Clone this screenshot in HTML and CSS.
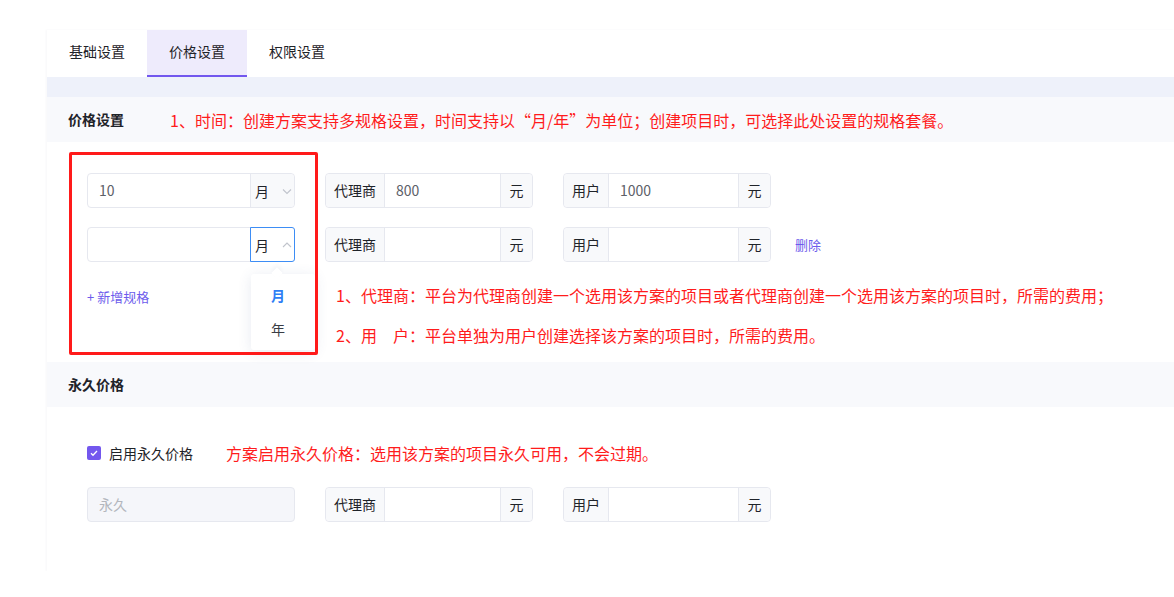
FILE: index.html
```html
<!DOCTYPE html>
<html lang="zh-CN">
<head>
    <meta charset="UTF-8">
    <meta name="viewport" content="width=device-width, initial-scale=1.0">
    <title>价格设置</title>
    <link rel="stylesheet" href="styles.css">
</head>
<body>
    <div class="page">
        <!-- Tabs -->
        <div class="tabs">
            <div class="tab">基础设置</div>
            <div class="tab active">价格设置</div>
            <div class="tab">权限设置</div>
        </div>
        <div class="band"></div>

        <!-- 价格设置 -->
        <div class="section-head">
            <span class="head-title">价格设置</span>
            <span class="note head-note">1、时间：创建方案支持多规格设置，时间支持以“月/年”为单位；创建项目时，可选择此处设置的规格套餐。</span>
        </div>
        <div class="section-body price-body">
            <div class="mark-box"></div>

            <div class="row">
                <div class="group spec">
                    <div class="field value">10</div>
                    <div class="unit-select">
                        <span>月</span>
                        <svg class="chev" viewBox="0 0 12 12"><path d="M2 4.5l4 4 4-4" fill="none" stroke="#c0c4cc" stroke-width="1.1"/></svg>
                    </div>
                </div>
                <div class="group agent">
                    <div class="addon pre">代理商</div>
                    <div class="field value">800</div>
                    <div class="addon suf">元</div>
                </div>
                <div class="group user">
                    <div class="addon pre">用户</div>
                    <div class="field value">1000</div>
                    <div class="addon suf">元</div>
                </div>
            </div>

            <div class="row">
                <div class="group spec">
                    <div class="field"></div>
                    <div class="unit-select focus">
                        <span>月</span>
                        <svg class="chev" viewBox="0 0 12 12"><path d="M2 8l4-4 4 4" fill="none" stroke="#c0c4cc" stroke-width="1.1"/></svg>
                    </div>
                    <div class="dropdown">
                        <div class="option current">月</div>
                        <div class="option">年</div>
                    </div>
                </div>
                <div class="group agent">
                    <div class="addon pre">代理商</div>
                    <div class="field"></div>
                    <div class="addon suf">元</div>
                </div>
                <div class="group user">
                    <div class="addon pre">用户</div>
                    <div class="field"></div>
                    <div class="addon suf">元</div>
                </div>
                <a class="link delete" href="#">删除</a>
            </div>

            <div class="add-row">
                <a class="link add" href="#">+ 新增规格</a>
                <div class="notes">
                    <div class="note">1、代理商：平台为代理商创建一个选用该方案的项目或者代理商创建一个选用该方案的项目时，所需的费用；</div>
                    <div class="note">2、用　户：平台单独为用户创建选择该方案的项目时，所需的费用。</div>
                </div>
            </div>
        </div>

        <!-- 永久价格 -->
        <div class="section-head">
            <span class="head-title">永久价格</span>
        </div>
        <div class="section-body forever-body">
            <div class="check-row">
                <span class="checkbox">
                    <svg viewBox="0 0 14 14"><path d="M4 7.2l2 2 4-4.2" fill="none" stroke="#fff" stroke-width="1.3"/></svg>
                </span>
                <span class="check-label">启用永久价格</span>
                <span class="note check-note">方案启用永久价格：选用该方案的项目永久可用，不会过期。</span>
            </div>
            <div class="row">
                <div class="group spec disabled">
                    <div class="field placeholder">永久</div>
                </div>
                <div class="group agent">
                    <div class="addon pre">代理商</div>
                    <div class="field"></div>
                    <div class="addon suf">元</div>
                </div>
                <div class="group user">
                    <div class="addon pre">用户</div>
                    <div class="field"></div>
                    <div class="addon suf">元</div>
                </div>
            </div>
        </div>
    </div>
</body>
</html>
```

FILE: styles.css
```css
body {
    margin: 0;
    background: #fff;
    font-family: "Noto Sans CJK SC", "Noto Sans", sans-serif;
    color: #1f2329;
    font-size: 14px;
    overflow: hidden;
}

.page {
    margin: 30px 0 0 47px;
    box-shadow: -1px 0 2px rgba(40, 50, 90, 0.04);
}

/* tabs */
.tabs {
    display: flex;
    background: #fff;
    height: 47px;
    border-radius: 4px 0 0 0;
}
.tab {
    width: 100px;
    height: 45px;
    line-height: 43px;
    text-align: center;
    border-bottom: 2px solid transparent;
    color: #1f2329;
}
.tab.active {
    background: #eeebfc;
    border-bottom-color: #7257ee;
}
.band {
    height: 20px;
    background: #eef1fa;
}

/* section header */
.section-head {
    height: 43px;
    padding-bottom: 2px;
    display: flex;
    align-items: center;
    padding-left: 21px;
    background: #f8f9fc;
}
.head-title {
    font-weight: bold;
    font-size: 14px;
}
.note {
    color: #ff1c1c;
    font-size: 16px;
    white-space: nowrap;
}
.head-note {
    margin-left: 46px;
    margin-top: 3px;
}

.section-body {
    background: #fff;
    padding-left: 40px;
    position: relative;
}
.price-body {
    padding-top: 31px;
    padding-bottom: 7px;
}
.forever-body {
    padding-top: 36px;
    padding-bottom: 49px;
}

/* red annotation frame */
.mark-box {
    position: absolute;
    left: 22px;
    top: 10px;
    width: 243px;
    height: 197px;
    border: 3px solid #ff1a1a;
    border-radius: 2px;
    z-index: 3;
}

.row {
    display: flex;
    align-items: center;
    margin-bottom: 19px;
}
.forever-body .row {
    margin-bottom: 0;
}

.group {
    display: flex;
    width: 206px;
    height: 33px;
    border: 1px solid #e6e8ef;
    border-radius: 4px;
    margin-right: 30px;
    position: relative;
}
.group.user {
    margin-right: 24px;
}
.field {
    flex: 1;
    line-height: 33px;
    padding-left: 11px;
    color: #5c6068;
}
.value {
    font-size: 14px;
}
.addon {
    background: #f8f9fb;
    line-height: 33px;
    text-align: center;
    color: #1f2329;
}
.pre {
    border-right: 1px solid #e6e8ef;
    border-radius: 4px 0 0 4px;
}
.suf {
    width: 31px;
    border-left: 1px solid #e6e8ef;
    border-radius: 0 4px 4px 0;
}
.agent .pre {
    width: 58px;
}
.user .pre {
    width: 44px;
}

.unit-select {
    width: 44px;
    display: flex;
    align-items: center;
    padding-left: 4px;
    box-sizing: border-box;
    background: #f8f9fb;
    border-left: 1px solid #e6e8ef;
    border-radius: 0 4px 4px 0;
    color: #1f2329;
}
.unit-select.focus {
    background: #fff;
    margin: -1px -1px -1px 0;
    width: 45px;
    border: 1px solid #3d8df5;
    border-radius: 0 3px 3px 0;
}
.chev {
    width: 12px;
    height: 12px;
    margin-left: 12px;
}

.dropdown {
    position: absolute;
    left: 163px;
    top: 46px;
    width: 64px;
    padding: 4px 0;
    background: #fff;
    border-radius: 3px;
    box-shadow: 0 2px 14px rgba(60, 80, 140, 0.12);
    z-index: 2;
}
.dropdown::before {
    content: "";
    position: absolute;
    top: -5px;
    left: 22px;
    width: 8px;
    height: 8px;
    background: #fff;
    transform: rotate(45deg);
    box-shadow: -2px -2px 4px rgba(60, 80, 140, 0.05);
}
.option {
    height: 34px;
    line-height: 34px;
    padding-left: 20px;
    color: #3a3d44;
}
.option.current {
    color: #2f7ef5;
    font-weight: bold;
}

.link {
    text-decoration: none;
    color: #6d5cec;
    font-size: 13px;
}

.add-row {
    display: flex;
    margin-top: -6px;
}
.add {
    width: 249px;
    line-height: 40px;
    padding-top: 2px;
}
.notes .note {
    line-height: 40px;
}

/* forever price */
.check-row {
    display: flex;
    align-items: center;
    height: 20px;
    margin-bottom: 24px;
}
.checkbox {
    width: 14px;
    height: 14px;
    border-radius: 2px;
    background: #7357ee;
    display: flex;
}
.checkbox svg {
    width: 14px;
    height: 14px;
}
.check-label {
    margin-left: 8px;
    font-size: 14px;
}
.check-note {
    margin-left: 33px;
}
.disabled {
    background: #f5f6fa;
}
.placeholder {
    color: #b3b6bd;
}
```
